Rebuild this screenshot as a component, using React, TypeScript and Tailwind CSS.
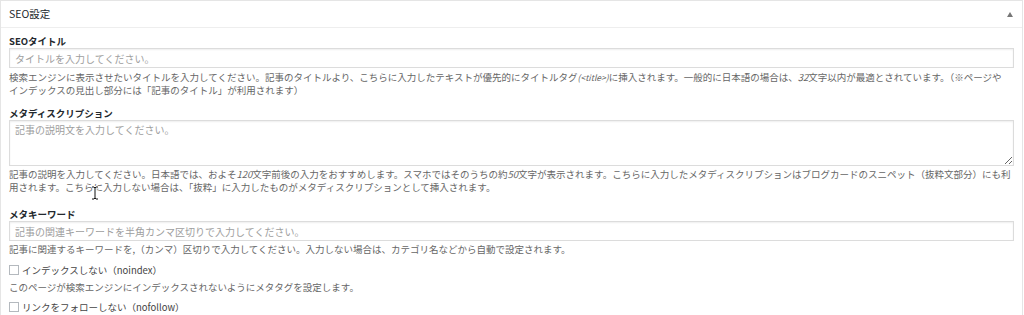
import React from "react";

const font = "font-['Noto_Sans_CJK_JP','Liberation_Sans',sans-serif]";

function Label({ children }: { children: React.ReactNode }) {
  return (
    <div className="h-[13px] text-[9.5px] leading-[13px] font-bold text-[#23282d]">
      {children}
    </div>
  );
}

function Help({ lines }: { lines: React.ReactNode[] }) {
  return (
    <div className="text-[9.5px] leading-[13px] text-[#666] whitespace-nowrap">
      {lines.map((line, i) => (
        <div key={i}>{line}</div>
      ))}
    </div>
  );
}

function CheckRow({ label }: { label: string }) {
  return (
    <div className="flex items-center h-[14px] text-[9.5px] text-[#444]">
      <span className="w-[10px] h-[10px] border border-[#b4b9be] bg-white mr-[3px]" />
      <span>{label}</span>
    </div>
  );
}

function Cursor() {
  return (
    <svg
      className="absolute left-[91px] top-[186px]"
      width="8"
      height="14"
      viewBox="0 0 8 14"
    >
      <path
        d="M1 1h2l1 1 1-1h2M4 2v10M1 13h2l1-1 1 1h2"
        stroke="#fff"
        strokeWidth="2.2"
        fill="none"
      />
      <path
        d="M1 1h2l1 1 1-1h2M4 2v10M1 13h2l1-1 1 1h2"
        stroke="#111"
        strokeWidth="1"
        fill="none"
      />
    </svg>
  );
}

export default function App() {
  const inputCls =
    "block w-full h-[20px] border border-[#dcdcdc] bg-white px-[5px] text-[10px] text-[#333] outline-none shadow-[inset_0_1px_2px_rgba(0,0,0,0.07)] placeholder:text-[#9e9e9e]";

  return (
    <div className={`relative w-[1024px] h-[315px] overflow-hidden bg-white ${font}`}>
      <div className="w-[1023px] border-t border-l border-r border-[#e5e5e5] bg-white">
        {/* header */}
        <div className="h-[27px] flex items-center justify-between pl-[8px] pr-[9px] border-b border-[#eee]">
          <span className="text-[10.5px] text-[#23282d]">SEO設定</span>
          <svg width="6" height="5" viewBox="0 0 6 5">
            <path d="M3 0L6 5H0z" fill="#777" />
          </svg>
        </div>

        <div className="px-[8px] pt-[7px] pb-4">
          {/* SEO title */}
          <Label>SEOタイトル</Label>
          <input className={inputCls} placeholder="タイトルを入力してください。" />
          <div className="mt-[3px]">
            <Help
              lines={[
                <>
                  検索エンジンに表示させたいタイトルを入力してください。記事のタイトルより、こちらに入力したテキストが優先的にタイトルタグ
                  <i className="text-[8.5px]">(&lt;title&gt;)</i>
                  に挿入されます。一般的に日本語の場合は、<i>32</i>
                  文字以内が最適とされています。（※ページや
                </>,
                "インデックスの見出し部分には「記事のタイトル」が利用されます）",
              ]}
            />
          </div>

          {/* meta description */}
          <div className="mt-[10px]">
            <Label>メタディスクリプション</Label>
            <textarea
              className="block w-full h-[46px] border border-[#dcdcdc] bg-white px-[5px] pt-[2px] text-[10px] leading-[13px] outline-none shadow-[inset_0_1px_2px_rgba(0,0,0,0.07)] placeholder:text-[#9e9e9e]"
              placeholder="記事の説明文を入力してください。"
            />
            <div className="mt-[2px]">
              <Help
                lines={[
                  <>
                    記事の説明を入力してください。日本語では、およそ<i>120</i>
                    文字前後の入力をおすすめします。スマホではそのうちの約<i>50</i>
                    文字が表示されます。こちらに入力したメタディスクリプションはブログカードのスニペット（抜粋文部分）にも利
                  </>,
                  "用されます。こちらに入力しない場合は、「抜粋」に入力したものがメタディスクリプションとして挿入されます。",
                ]}
              />
            </div>
          </div>

          {/* meta keywords */}
          <div className="mt-[14px]">
            <Label>メタキーワード</Label>
            <input
              className={inputCls}
              placeholder="記事の関連キーワードを半角カンマ区切りで入力してください。"
            />
            <div className="mt-[2px]">
              <Help
                lines={[
                  "記事に関連するキーワードを,（カンマ）区切りで入力してください。入力しない場合は、カテゴリ名などから自動で設定されます。",
                ]}
              />
            </div>
          </div>

          {/* noindex */}
          <div className="mt-[7px]">
            <CheckRow label="インデックスしない（noindex）" />
            <div className="mt-[4px]">
              <Help
                lines={[
                  "このページが検索エンジンにインデックスされないようにメタタグを設定します。",
                ]}
              />
            </div>
          </div>

          {/* nofollow */}
          <div className="mt-[6px]">
            <CheckRow label="リンクをフォローしない（nofollow）" />
          </div>
        </div>
      </div>
      <Cursor />
    </div>
  );
}
